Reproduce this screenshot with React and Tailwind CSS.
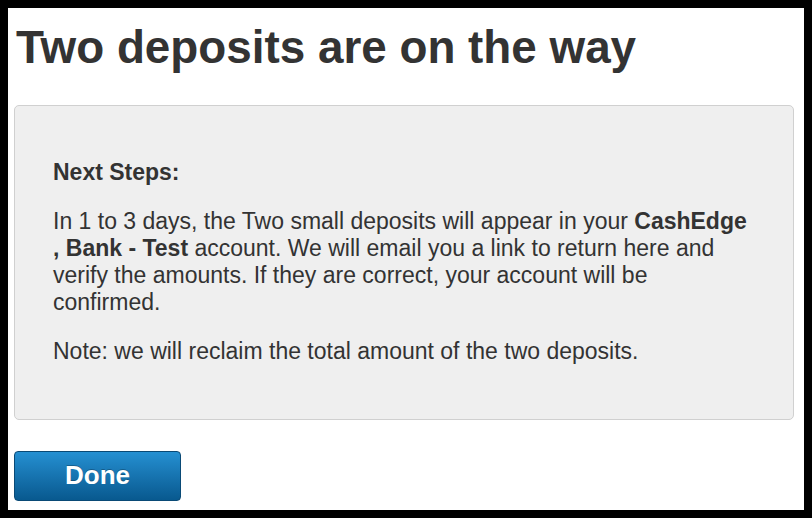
export default function App() {
  return (
    <div
      className="w-[812px] h-[518px] border-[8px] border-black bg-white text-[#333333] flex flex-col"
      style={{ fontFamily: '"Liberation Sans", Arial, sans-serif' }}
    >
      <h1 className="text-[45.8px] leading-[49.5px] font-bold pl-[8px] pt-[15px] m-0">
        Two deposits are on the way
      </h1>
      <div className="mt-[32px] ml-[6px] mr-[10px] rounded-[5px] border border-[#d0d0d0] bg-[#efefef] pt-[53px] pb-[31px] pl-[38px] pr-[40px] text-[23px] leading-[26.75px]">
        <p className="font-bold mb-[23px]">Next Steps:</p>
        <p className="mb-[23px]">
          In 1 to 3 days, the Two small deposits will appear in your{" "}
          <b>CashEdge , Bank - Test</b> account. We will email you a link to return here and verify
          the amounts. If they are correct, your account will be confirmed.
        </p>
        <p className="mb-[23px]">Note: we will reclaim the total amount of the two deposits.</p>
      </div>
      <div className="mt-[31px] ml-[6px]">
        <button className="w-[167px] h-[50px] rounded-[4px] border border-[#0a4a76] bg-gradient-to-b from-[#2590d2] to-[#08598f] text-white font-bold text-[26px] flex items-center justify-center pb-[2px] [text-shadow:0_-1px_0_rgba(0,0,0,0.25)]">
          Done
        </button>
      </div>
    </div>
  );
}
